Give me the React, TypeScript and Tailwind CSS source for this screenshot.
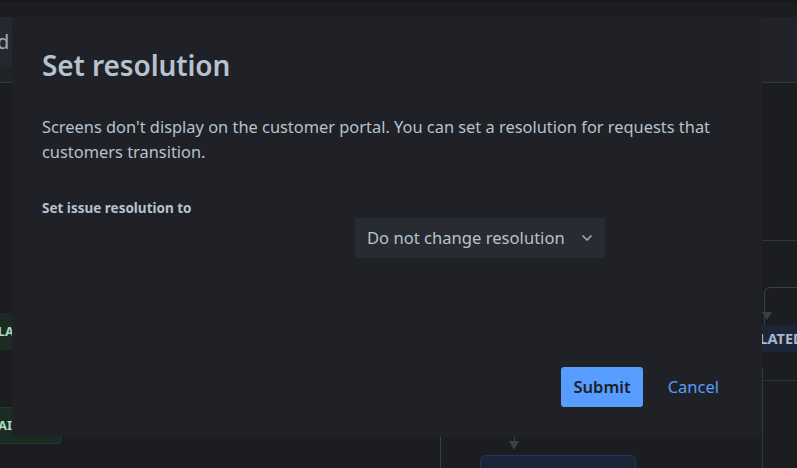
import { ChevronDown } from "lucide-react";

function Background() {
  return (
    <div className="absolute inset-0">
      <div className="h-[2px] bg-[#16181b]" />
      <div className="h-[66px] border-b border-[#353a41] bg-[#212329]">
        <div className="mt-[15px] flex h-[50px] w-[95px] items-center bg-[#25282e] text-[20px] text-[#9fadbc]">
          <span className="-ml-[3px]">d</span>
        </div>
      </div>

      {/* workflow diagram behind the blanket */}
      <div className="absolute left-[762px] top-[240px] h-px w-[40px] bg-[#30343b]" />
      <div className="absolute left-[764px] top-[287px] h-[40px] w-[60px] rounded-tl-[6px] border-l border-t border-[#3a3f46]" />
      <div className="absolute left-[762px] top-[312px] h-0 w-0 border-x-[5px] border-t-[8px] border-x-transparent border-t-[#3a3f46]" />
      <div className="absolute left-[700px] top-[325px] flex h-[27px] w-[120px] items-center rounded-[3px] bg-[#1c2638] pl-[24px] text-[14.5px] font-bold text-[#a9b8ce]">
        ESCALATED
      </div>
      <div className="absolute left-[762px] top-[367px] h-[110px] w-px bg-[#33373e]" />
      <div className="absolute left-[762px] top-[380px] h-px w-[40px] bg-[#30343b]" />

      <div className="absolute -left-[40px] top-[313px] flex h-[37px] w-[60px] items-center justify-end rounded-[3px] bg-[#1c2b23] text-[13px] font-bold text-[#a6dcc0]">
        <span className="mr-[6px]">CLA</span>
      </div>
      <div className="absolute -left-[40px] top-[407px] flex h-[37px] w-[102px] items-center rounded-[4px] border border-[#1f3a2b] bg-[#1c2b23] text-[13px] font-bold text-[#a6dcc0]">
        <span className="ml-[37px]">AI</span>
      </div>

      <div className="absolute left-[440px] top-[437px] h-[40px] w-px bg-[#3a3f46]" />
      <div className="absolute left-[514px] top-[437px] h-[8px] w-px bg-[#3a3f46]" />
      <div className="absolute left-[509px] top-[441px] h-0 w-0 border-x-[5px] border-t-[9px] border-x-transparent border-t-[#3a3f46]" />
      <div className="absolute left-[480px] top-[455px] h-[30px] w-[156px] rounded-[5px] border border-[#1d3560] bg-[#1c2538]" />
    </div>
  );
}

export default function App() {
  return (
    <div
      className="relative h-[468px] w-[797px] overflow-hidden bg-[#1b1d21]"
      style={{ fontFamily: '"Noto Sans", "Open Sans", sans-serif' }}
    >
      <Background />

      <div className="absolute left-[12px] top-[17px] flex h-[420px] w-[750px] flex-col rounded-[3px] bg-[#1f2126] px-[30px] pb-[30px] pt-[28px] text-[#b6c2cf]">
        <h1 className="text-[28px] font-semibold leading-[40px] tracking-[-0.1px]">Set resolution</h1>

        <p className="mt-[29px] text-[16.4px] leading-[25px]">
          Screens don't display on the customer portal. You can set a resolution for requests that customers
          transition.
        </p>

        <div className="mt-[34px] grid grid-cols-[313px_250px]">
          <label className="text-[13.5px] font-bold leading-[20px] text-[#b6c2cf]">Set issue resolution to</label>
          <button className="mt-[20px] flex h-[40px] items-center justify-between rounded-[3px] bg-[#282b31] pl-[12px] pr-[10px] text-[16.6px] text-[#b6c2cf]">
            <span>Do not change resolution</span>
            <ChevronDown size={16} strokeWidth={2.5} className="text-[#9fadbc]" />
          </button>
        </div>

        <div className="mt-auto flex justify-end gap-[12px]">
          <button className="h-[40px] rounded-[3px] bg-[#579dff] px-[12px] text-[16.5px] font-semibold text-[#1d2125]">
            Submit
          </button>
          <button className="h-[40px] rounded-[3px] px-[13px] text-[16.5px] text-[#579dff]">Cancel</button>
        </div>
      </div>
    </div>
  );
}
